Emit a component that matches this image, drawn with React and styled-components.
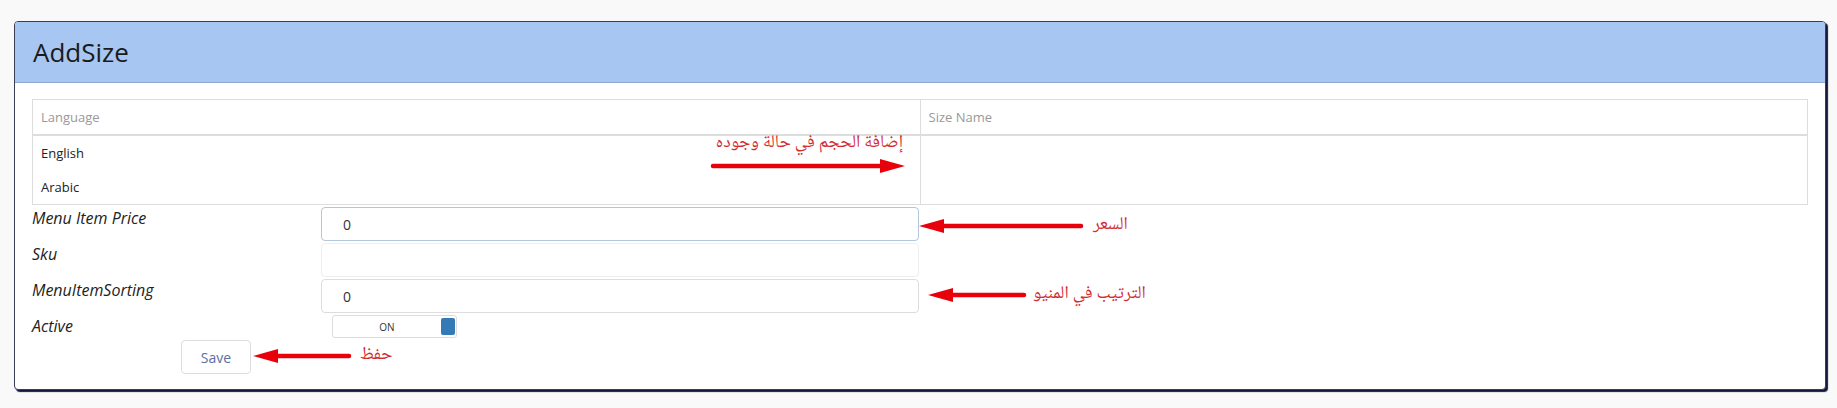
import React from "react";
import styled, { createGlobalStyle } from "styled-components";

const GlobalStyle = createGlobalStyle`
  body {
    margin: 0;
    background: #f9f9f9;
    font-family: "Open Sans", "Segoe UI", sans-serif;
  }
`;

const Page = styled.div`
  padding: 21px 11px 16px 14px;
`;

const Card = styled.section`
  position: relative;
  background: #fff;
  border: 1px solid #3a3d55;
  border-radius: 4px;
  box-shadow: 2px 2px 1px #15183a;
`;

const Header = styled.header`
  height: 60px;
  display: flex;
  align-items: center;
  padding-left: 18px;
  background: #a7c7f2;
  border-bottom: 1px solid #8eaad3;
  border-radius: 3px 3px 0 0;

  h1 {
    margin: 0;
    font-size: 26px;
    font-weight: 400;
    color: #1b1b1b;
  }
`;

const Body = styled.div`
  padding: 16px 17px 15px 17px;
`;

const Table = styled.table`
  width: 100%;
  border-collapse: collapse;
  table-layout: fixed;

  th {
    height: 34px;
    padding: 0 8px;
    text-align: left;
    font-weight: 400;
    font-size: 13px;
    color: #999;
    border: 1px solid #ddd;
    border-bottom-width: 2px;
  }

  td {
    padding: 0 8px;
    vertical-align: top;
    border: 1px solid #ddd;
  }
`;

const LangLine = styled.div`
  line-height: 34px;
  font-size: 13px;
  color: #222;
`;

const Form = styled.div`
  display: grid;
  grid-template-columns: 289px 598px;
  row-gap: 2px;
  margin-top: 2px;
`;

const Label = styled.div`
  font-style: italic;
  font-size: 16px;
  line-height: 22px;
  color: #222;
`;

const Input = styled.input`
  box-sizing: border-box;
  height: 34px;
  padding: 0 21px;
  border: 1px solid ${(p) => p.$border};
  border-radius: 4px;
  font-family: inherit;
  font-size: 14px;
  color: #333;
  background: #fff;
  outline: none;
`;

const Toggle = styled.div`
  box-sizing: border-box;
  width: 125px;
  height: 23px;
  margin-left: 11px;
  display: flex;
  align-items: center;
  border: 1px solid #ddd;
  border-radius: 3px;

  span {
    flex: 1;
    text-align: center;
    font-size: 10px;
    color: #333;
  }
`;

const Knob = styled.i`
  width: 14px;
  height: 17px;
  margin-right: 1px;
  border-radius: 2px;
  background: #337ab7;
`;

const SaveButton = styled.button`
  width: 70px;
  height: 34px;
  margin: 2px 0 0 149px;
  border: 1px solid #ddd;
  border-radius: 4px;
  background: #fff;
  font-family: inherit;
  font-size: 14px;
  color: #5a6fa5;
`;

const Note = styled.div`
  position: absolute;
  left: ${(p) => p.$left}px;
  top: ${(p) => p.$top}px;
  width: ${(p) => p.$width}px;
  text-align: ${(p) => (p.$alignRight ? "right" : "left")};
  direction: rtl;
  unicode-bidi: plaintext;
  font-family: "Noto Naskh Arabic", "Noto Sans Arabic", "DejaVu Sans", sans-serif;
  font-size: 18px;
  line-height: 26px;
  color: #d42a2e;
  white-space: nowrap;
`;

const ArrowBox = styled.svg`
  position: absolute;
  left: ${(p) => p.$left}px;
  top: ${(p) => p.$top}px;
  transform: ${(p) => (p.$right ? "scaleX(-1)" : "none")};
`;

function Arrow({ left, top, width, right }) {
  return (
    <ArrowBox $left={left} $top={top} $right={right} width={width} height="16" viewBox={`0 0 ${width} 16`}>
      <path d="M0 8 L25 1 L25 15 Z" fill="#e8000b" />
      <line x1="22" y1="8" x2={width - 3} y2="8" stroke="#e8000b" strokeWidth="4.5" strokeLinecap="round" />
    </ArrowBox>
  );
}

export default function App() {
  return (
    <Page>
      <GlobalStyle />
      <Card>
        <Header>
          <h1>AddSize</h1>
        </Header>
        <Body>
          <Table>
            <thead>
              <tr>
                <th>Language</th>
                <th>Size Name</th>
              </tr>
            </thead>
            <tbody>
              <tr>
                <td>
                  <LangLine>English</LangLine>
                  <LangLine>Arabic</LangLine>
                </td>
                <td></td>
              </tr>
            </tbody>
          </Table>
          <Form>
            <Label>Menu Item Price</Label>
            <Input $border="#b3c6dc" defaultValue="0" />
            <Label>Sku</Label>
            <Input $border="#eeeeee" defaultValue="" />
            <Label>MenuItemSorting</Label>
            <Input $border="#dddddd" defaultValue="0" />
            <Label>Active</Label>
            <Toggle>
              <span>ON</span>
              <Knob />
            </Toggle>
          </Form>
          <SaveButton>Save</SaveButton>
        </Body>

        <Note $left={640} $top={108} $width={248} $alignRight>إضافة الحجم في حالة وجوده</Note>
        <Arrow left={695} top={136} width={195} right />
        <Arrow left={904} top={196} width={165} />
        <Note $left={1078} $top={190} $width={70}>السعر</Note>
        <Arrow left={913} top={265} width={99} />
        <Note $left={1018} $top={259} $width={140}>الترتيب في المنيو</Note>
        <Arrow left={238} top={326} width={99} />
        <Note $left={345} $top={320} $width={60}>حفظ</Note>
      </Card>
    </Page>
  );
}
